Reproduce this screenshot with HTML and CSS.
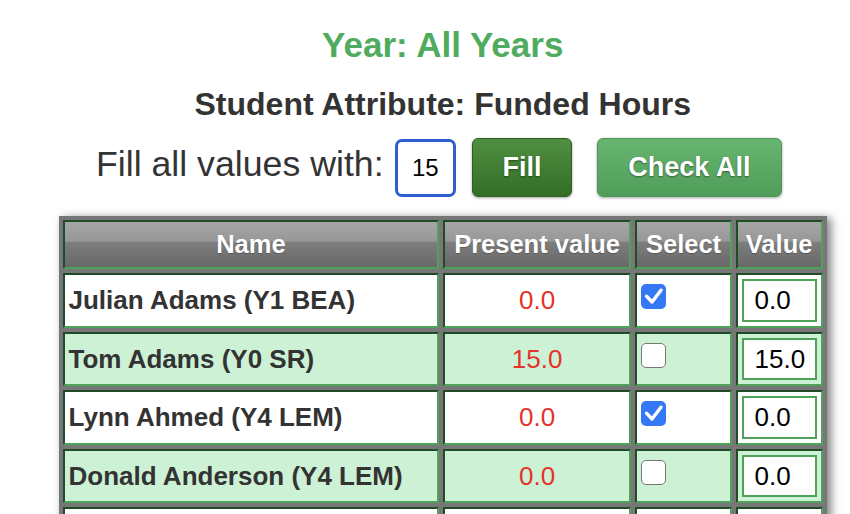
FILE: index.html
```html
<!DOCTYPE html>
<html lang="en">
<head>
<meta charset="utf-8">
<title>Funded Hours</title>
<link rel="stylesheet" href="styles.css">
</head>
<body>
<div class="wrap">
  <h1 class="year">Year: All Years</h1>
  <h2 class="attr">Student Attribute: Funded Hours</h2>
  <div class="fill-row">
    <span class="fill-label">Fill all values with:</span>
    <input class="fill-input" type="text" value="15">
    <button class="btn btn-fill" type="button">Fill</button>
    <button class="btn btn-check" type="button">Check All</button>
  </div>
  <table class="grid">
    <thead>
      <tr>
        <th class="c-name">Name</th>
        <th class="c-present">Present value</th>
        <th class="c-select">Select</th>
        <th class="c-value">Value</th>
      </tr>
    </thead>
    <tbody>
      <tr class="odd">
        <td class="name">Julian Adams (Y1 BEA)</td>
        <td class="present">0.0</td>
        <td class="select"><span class="cb checked"><svg viewBox="0 0 25 25" width="25" height="25"><path d="M5.5 12.2 L11 18 L20 6.2" fill="none" stroke="#fff" stroke-width="3.4" stroke-linecap="round" stroke-linejoin="round"/></svg></span></td>
        <td class="value"><input class="val-input" type="text" value="0.0"></td>
      </tr>
      <tr class="even">
        <td class="name">Tom Adams (Y0 SR)</td>
        <td class="present">15.0</td>
        <td class="select"><span class="cb"></span></td>
        <td class="value"><input class="val-input" type="text" value="15.0"></td>
      </tr>
      <tr class="odd">
        <td class="name">Lynn Ahmed (Y4 LEM)</td>
        <td class="present">0.0</td>
        <td class="select"><span class="cb checked"><svg viewBox="0 0 25 25" width="25" height="25"><path d="M5.5 12.2 L11 18 L20 6.2" fill="none" stroke="#fff" stroke-width="3.4" stroke-linecap="round" stroke-linejoin="round"/></svg></span></td>
        <td class="value"><input class="val-input" type="text" value="0.0"></td>
      </tr>
      <tr class="even">
        <td class="name">Donald Anderson (Y4 LEM)</td>
        <td class="present">0.0</td>
        <td class="select"><span class="cb"></span></td>
        <td class="value"><input class="val-input" type="text" value="0.0"></td>
      </tr>
      <tr class="odd">
        <td class="name"></td>
        <td class="present"></td>
        <td class="select"></td>
        <td class="value"></td>
      </tr>
    </tbody>
  </table>
</div>
</body>
</html>
```

FILE: styles.css
```css
html, body {
  margin: 0;
  padding: 0;
  overflow: hidden;
  background: #fff;
}

body {
  font-family: "Liberation Sans", Arial, sans-serif;
  color: #333;
}

.wrap {
  width: 767.5px;
  margin-left: 59px;
  padding-top: 25px;
}

.year {
  margin: 0;
  font-size: 35px;
  line-height: 40px;
  font-weight: bold;
  color: #4fac5e;
  text-align: center;
}

.attr {
  margin: 19px 0 0;
  font-size: 32px;
  line-height: 40px;
  font-weight: bold;
  color: #333;
  text-align: center;
}

.fill-row {
  display: flex;
  align-items: baseline;
  padding-left: 37px;
  margin-top: 14px;
}

.fill-label {
  font-size: 35.7px;
  line-height: 40px;
  color: #333;
}

.fill-input {
  box-sizing: border-box;
  width: 61.5px;
  height: 57.6px;
  margin: 0 0 0 11px;
  border: 3px solid #2d60cd;
  border-radius: 7px;
  padding: 0;
  font-family: "Liberation Sans", Arial, sans-serif;
  font-size: 24px;
  color: #000;
  text-align: center;
  background: #fff;
  outline: none;
}

.btn {
  box-sizing: border-box;
  height: 59.3px;
  padding: 0;
  border-radius: 6px;
  font-family: "Liberation Sans", Arial, sans-serif;
  font-size: 27px;
  font-weight: bold;
  color: #fff;
  text-shadow: 0 1px 2px rgba(0, 0, 0, 0.45);
  box-shadow: 0 1px 3px rgba(0, 0, 0, 0.35);
  cursor: pointer;
}

.btn-fill {
  width: 100px;
  margin-left: 16px;
  border: 1px solid #2c5e22;
  background: linear-gradient(#508f42, #336d26);
}

.btn-check {
  width: 185.4px;
  margin-left: 24.6px;
  border: 1px solid #4a9656;
  background: linear-gradient(#68b571, #509d5a);
}

.grid {
  margin-top: 19px;
  width: 767.5px;
  table-layout: fixed;
  border-collapse: separate;
  border-spacing: 4.5px;
  background: #777;
  box-shadow: 4px 2px 9px rgba(0, 0, 0, 0.5);
}

.grid th,
.grid td {
  box-sizing: border-box;
  border-style: solid;
  border-width: 2px;
  border-color: #1f4b27 #4ea25a #4ea25a #1f4b27;
}

.grid th {
  height: 49px;
  padding: 0;
  font-size: 25.5px;
  font-weight: bold;
  color: #fff;
  text-align: center;
  text-shadow: 0 1px 1px rgba(0, 0, 0, 0.25);
  background: linear-gradient(#a6a6a6 0%, #979797 43%, #7e7e7e 44%, #686868 100%);
}

.c-name { width: 374.5px; }
.c-present { width: 188px; }
.c-select { width: 96px; }
.c-value { width: 86.5px; }

.grid td {
  height: 54.5px;
  padding: 0;
  font-size: 26px;
}

.odd td { background: #fff; }
.even td { background: #cdf1d5; }

td.name {
  padding-left: 3.5px;
  font-weight: bold;
  color: #333;
  white-space: nowrap;
}

td.present {
  text-align: center;
  color: #e5322a;
}

td.select {
  vertical-align: top;
  padding: 9px 0 0 4px;
}

.cb {
  display: block;
  box-sizing: border-box;
  width: 25px;
  height: 25px;
  border-radius: 5px;
  border: 1.5px solid #777;
  background: #fff;
}

.cb.checked {
  border: none;
  background: #3478f6;
}

.cb svg {
  display: block;
}

td.value {
  padding: 0;
}

.val-input {
  display: block;
  box-sizing: border-box;
  width: 75px;
  height: 42.5px;
  margin: 0 auto;
  padding: 0 0 0 11px;
  border: 2px solid #4ea25a;
  background: #fff;
  font-family: "Liberation Sans", Arial, sans-serif;
  font-size: 26px;
  color: #000;
  outline: none;
}
```
